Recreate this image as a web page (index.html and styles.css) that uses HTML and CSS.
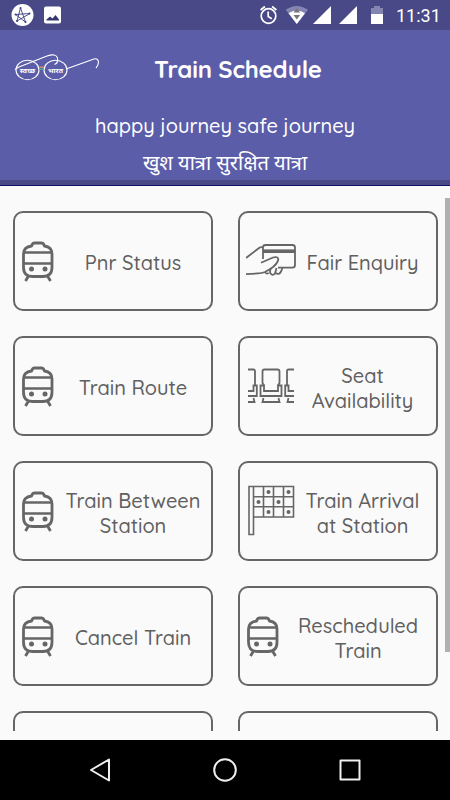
FILE: index.html
```html
<!DOCTYPE html>
<html lang="en">
<head>
    <meta charset="UTF-8">
    <meta name="viewport" content="width=device-width, initial-scale=1.0">
    <title>Train Schedule</title>
    <link rel="stylesheet" href="styles.css">
</head>
<body>
    <!-- Icons used more than once -->
    <svg class="symbols" width="0" height="0">
        <symbol id="train" viewBox="0 0 34 42">
            <g fill="none" stroke="#666" stroke-width="2.800">
                <path d="M10.500 6 11.500 4Q12 3 13.500 3h7Q22 3 22.500 4L23.500 6Q31 7 31 14v13Q31 36.500 22 36.500H12Q2.500 36.500 2.500 27V14Q2.500 7 10.500 6z"/>
                <path d="M2.500 12.500h29M2.500 23.500h29" stroke-width="2.700"/>
                <path d="M7.500 36 4.500 41M26.500 36 29.500 41"/>
            </g>
            <circle cx="10.500" cy="29" r="2.500" fill="#666"/>
            <circle cx="24" cy="29" r="2.500" fill="#666"/>
        </symbol>
    </svg>

    <div class="status-bar">
        <svg width="450" height="30" viewBox="0 0 450 30">
            <circle cx="22.500" cy="15" r="11" fill="#fff"/>
            <path d="M20.500 8 25.500 22 15.500 14.500 30 13.500 17 21z" fill="none" stroke="#3c3f80" stroke-width="0.900"/>
            <g fill="#3c3f80"><circle cx="20.500" cy="8" r="1"/><circle cx="25.500" cy="22" r="1"/><circle cx="15.500" cy="14.500" r="1"/><circle cx="29.500" cy="13.500" r="1"/><circle cx="17" cy="21" r="1"/></g>
            <rect x="44" y="6.500" width="17" height="17" rx="2" fill="#fff"/>
            <path d="M46.500 20.500v-1l3.500-3 2.500 2 3-3.500 3.500 4.500v1z" fill="#33366f"/>
            <g fill="none" stroke="#fff" stroke-width="1.700">
                <circle cx="268.500" cy="16" r="7.300"/>
                <path d="M268.200 11.500v5l3.600 2.300M260.600 10l4.300-3.500M276.400 10l-4.300-3.500"/>
            </g>
            <path d="M285.700 9.800Q296.800 2 308 9.800L296.800 24z" fill="#8485b1"/>
            <path d="M288.500 13.200Q296.800 8 305 13.200L296.800 24z" fill="#fff"/>
            <path d="M293.500 12.500h6.600L296.800 8zM293.500 15h6.600l-3.300 4.500z" fill="#777"/>
            <path d="M313 24 331 6v18zM339 24 357 6v18z" fill="#fff"/>
            <path d="M371 14V8h3V6h6v2h3v6z" fill="#8485b1"/>
            <path d="M371 14h12v10h-12z" fill="#fff"/>
        </svg>
        <span class="time">11:31</span>
    </div>

    <div class="header">
        <div class="title-row">
            <svg class="logo" width="90" height="36" viewBox="0 0 90 36">
                <g fill="none" stroke="#fff" stroke-width="1.100">
                    <ellipse cx="17.500" cy="20" rx="11.500" ry="9.700"/>
                    <ellipse cx="45.500" cy="20" rx="11.500" ry="9.700"/>
                    <path d="M5 19.500 9 17 37 6Q46 3 47.500 8 48.500 13 44.500 14.500M56 19 84 9Q88 8 88.500 12 88.500 15.500 86 18"/>
                </g>
                <path d="M29.300 17.300h4.500" stroke="#d98b72" stroke-width="1.500"/>
                <path d="M29.300 19.400h4.500" stroke="#4a9" stroke-width="1.200"/>
                <text x="17.500" y="22.500" text-anchor="middle">स्वच्छ</text>
                <text x="45.500" y="22.500" text-anchor="middle">भारत</text>
            </svg>
            <h1>Train Schedule</h1>
        </div>
        <p class="tagline">happy journey safe journey</p>
        <p class="tagline-hi" lang="hi">खुश यात्रा सुरक्षित यात्रा</p>
    </div>

    <div class="content">
        <div class="menu">
            <div class="card">
                <svg class="train"><use href="#train"/></svg>
                <span>Pnr Status</span>
            </div>
            <div class="card">
                <svg width="52" height="52" viewBox="0 0 52 52" fill="none" stroke="#666" stroke-width="1.800">
                    <path d="M17 24V12.500Q17 10 19.500 10h27Q49 10 49 12.500V30Q49 32.600 46.500 32.600H32"/>
                    <path d="M17 16.200h32" stroke-width="3.600"/>
                    <path d="M0 23 13 13Q15 11.700 17 12.500M15 27.800 27 22.500Q32 21 32.300 24.500 31.500 29 25 33.500L19 37Q16 38.400 12 38.400L0 39.200"/>
                    <path d="M19 37Q20 39.500 22.700 38M25 33Q23.500 36 24.200 38 26.500 41.500 29 38.500L30.500 33M29.500 38Q33 40.500 35 36.500L36.500 33"/>
                </svg>
                <span>Fair Enquiry</span>
            </div>
            <div class="card">
                <svg class="train"><use href="#train"/></svg>
                <span>Train Route</span>
            </div>
            <div class="card">
                <svg width="52" height="52" viewBox="0 0 52 52" fill="none" stroke="#666" stroke-width="1.800">
                    <path d="M2 9.500h5.500Q9 9.500 9 11v14M48 9.500h-5.500Q41 9.500 41 11v14"/>
                    <path d="M18 25.500 16.500 23V11.500Q16.500 9.500 18.500 9.500h13Q33.500 9.500 33.500 11.500V23L32 25.500"/>
                    <path d="M2 31h5.500V25.500h3.300V36H2M48 31h-5.500V25.500h-3.300V36H48"/>
                    <path d="M14.500 36V25.500H18V31H32V25.500H35.500V36z"/>
                    <path d="M2 42h6.500L7.500 38M48 42h-6.500L42.500 38M17.500 38 16.500 42h17L32.500 38"/>
                </svg>
                <span>Seat<br>Availability</span>
            </div>
            <div class="card">
                <svg class="train"><use href="#train"/></svg>
                <span>Train Between<br>Station</span>
            </div>
            <div class="card">
                <svg width="52" height="52" viewBox="0 0 52 52" fill="none" stroke="#666" stroke-width="1.600">
                    <path d="M3 1.500h4.500v48H3zM7.500 1.500H47.500v30.500H7.500M7.500 11.700h40M7.500 21.800h40M17.500 1.500v30.500M27.500 1.500v30.500M37.500 1.500v30.500"/>
                    <g fill="#666" stroke="none">
                        <circle cx="22.500" cy="7" r="2"/><circle cx="42.500" cy="7" r="2"/>
                        <circle cx="12.500" cy="17" r="2"/><circle cx="32.500" cy="17" r="2"/>
                        <circle cx="22.500" cy="27" r="2"/><circle cx="42.500" cy="27" r="2"/>
                    </g>
                </svg>
                <span>Train Arrival<br>at Station</span>
            </div>
            <div class="card">
                <svg class="train"><use href="#train"/></svg>
                <span>Cancel Train</span>
            </div>
            <div class="card">
                <svg class="train"><use href="#train"/></svg>
                <span>Rescheduled<br>Train</span>
            </div>
            <div class="card"></div>
            <div class="card"></div>
        </div>
        <div class="scrollbar"></div>
    </div>

    <div class="nav-bar">
        <svg width="450" height="60" viewBox="0 0 450 60" fill="none" stroke="#eee" stroke-width="2" stroke-linejoin="round">
            <path d="M91 30 109 19.500v21z"/>
            <circle cx="225" cy="30" r="10.800"/>
            <rect x="340.500" y="20.500" width="19" height="19"/>
        </svg>
    </div>
</body>
</html>
```

FILE: styles.css
```css
* {
    box-sizing: border-box;
}

body {
    margin: 0;
    height: 100vh;
    display: flex;
    flex-direction: column;
    overflow: hidden;
    background: #fafafa;
    font-family: 'Quicksand', 'Lato', sans-serif;
    font-weight: 500;
}

svg {
    display: block;
    flex-shrink: 0;
}

.symbols {
    position: absolute;
}

.status-bar {
    display: flex;
    height: 30px;
    background: #484986;
}

.time {
    width: 60px;
    margin-left: -54px;
    color: #fff;
    font: 18px/32px 'Roboto', sans-serif;
}

.header {
    height: 156px;
    background: #5b5da9;
    border-bottom: 1px solid #0d1068;
    box-shadow: inset 0 -5px #484986;
    color: #fff;
    text-align: center;
}

.title-row {
    display: flex;
    align-items: center;
    height: 80px;
    padding-left: 10px;
}

.logo {
    margin-top: -5px;
}

.logo text {
    fill: #fff;
    font: bold 7px 'Noto Sans', sans-serif;
}

h1 {
    margin: -2px 0 0 54px;
    font-size: 24px;
    line-height: 30px;
    letter-spacing: -0.2px;
    white-space: nowrap;
}

.tagline {
    margin: 0;
    font-size: 20px;
    line-height: 32px;
}

.tagline-hi {
    margin: 6px 0 0;
    font: 20px/30px 'Noto Sans', sans-serif;
}

.content {
    display: flex;
    justify-content: space-between;
    height: 545px;
    padding-top: 12px;
    overflow: hidden;
}

.menu {
    display: grid;
    grid-template-columns: 200px 200px;
    grid-auto-rows: 100px;
    gap: 25px;
    padding: 13px 0 0 12.5px;
}

.card {
    display: flex;
    align-items: center;
    padding: 0 8px 0 6px;
    border: 2px solid #666;
    border-radius: 10px;
    color: #606060;
    font-size: 20px;
    line-height: 25px;
    text-align: center;
}

.card span {
    flex: 1;
    padding-top: 3px;
    white-space: nowrap;
}

.train {
    width: 34px;
    height: 42px;
    margin-right: 9px;
}

.scrollbar {
    width: 5px;
    height: 454px;
    background: #b0b0b0;
}

.nav-bar {
    height: 60px;
    margin-top: 9px;
    background: #000;
}
```
